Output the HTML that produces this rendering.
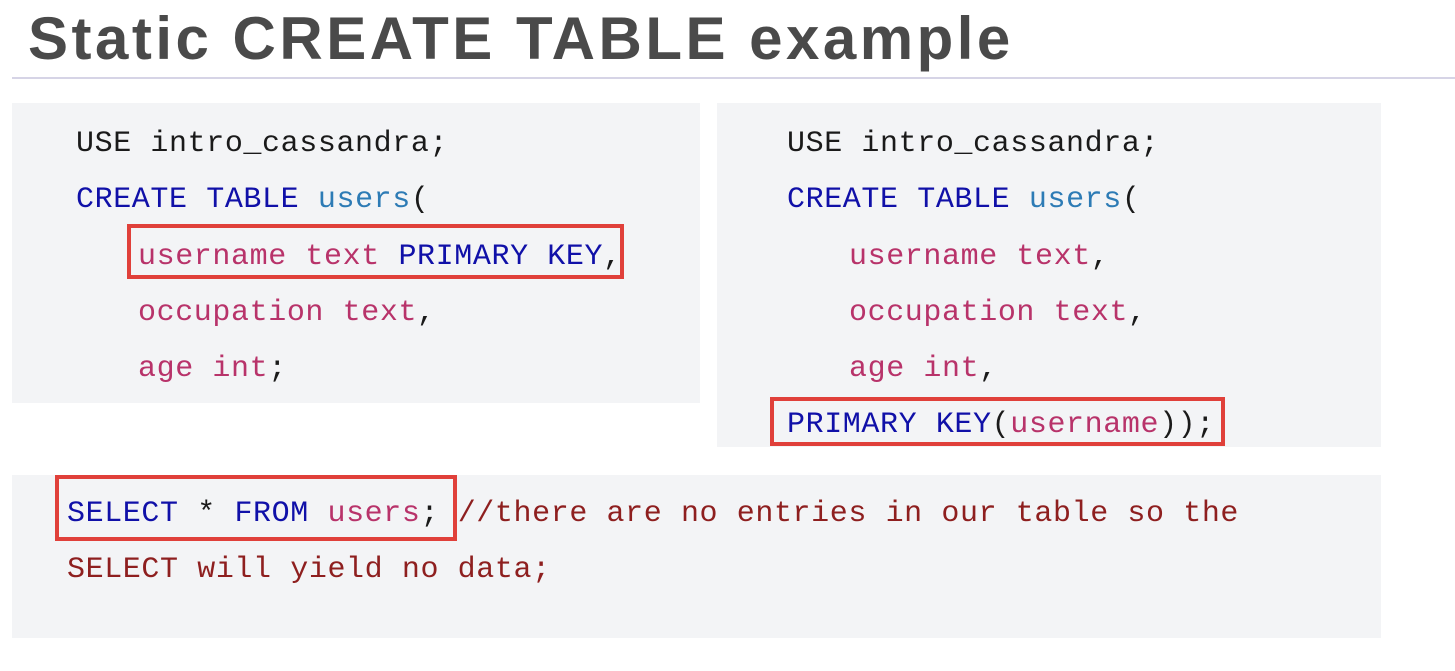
<!DOCTYPE html>
<html><head><meta charset="utf-8"><style>
body{margin:0;width:1455px;height:671px;background:#fff;position:relative;overflow:hidden;font-family:"Liberation Sans",sans-serif}
h1{position:absolute;left:28px;top:4px;margin:0;font-size:60px;font-weight:bold;color:#4a4a4a;letter-spacing:3.5px}
.rule{position:absolute;left:12px;top:77px;width:1443px;height:2px;background:#d6d4e6}
.box{position:absolute;background:#f3f4f6}
.code{position:absolute;font-family:"Liberation Mono",monospace;font-size:30px;letter-spacing:0.6px;line-height:56.3px;white-space:pre;color:#1a1a1a}
.k{color:#1010a8}.u{color:#2d7bb5}.p{color:#b8336a}.c{color:#8e1f1f}
.red{position:absolute;border:4px solid #e0403a;box-sizing:border-box}
</style></head><body>
<h1>Static CREATE TABLE example</h1>
<div class="rule"></div>
<div class="box" style="left:12px;top:103px;width:688px;height:300px"></div>
<div class="box" style="left:717px;top:103px;width:664px;height:344px"></div>
<div class="box" style="left:12px;top:475px;width:1369px;height:163px"></div>
<div class="code" style="left:76px;top:116px">USE intro_cassandra;
<span class="k">CREATE TABLE</span> <span class="u">users</span>(
<span style="padding-left:62px"></span><span class="p">username text</span> <span class="k">PRIMARY KEY</span>,
<span style="padding-left:62px"></span><span class="p">occupation text</span>,
<span style="padding-left:62px"></span><span class="p">age int</span>;</div>
<div class="code" style="left:787px;top:116px">USE intro_cassandra;
<span class="k">CREATE TABLE</span> <span class="u">users</span>(
<span style="padding-left:62px"></span><span class="p">username text</span>,
<span style="padding-left:62px"></span><span class="p">occupation text</span>,
<span style="padding-left:62px"></span><span class="p">age int</span>,
<span class="k">PRIMARY KEY</span>(<span class="p">username</span>));</div>
<div class="code" style="left:67px;top:486px"><span class="k">SELECT</span> * <span class="k">FROM</span> <span class="p">users</span>; <span class="c">//there are no entries in our table so the</span>
<span class="c">SELECT will yield no data;</span></div>
<div class="red" style="left:127px;top:224px;width:497px;height:55px"></div>
<div class="red" style="left:770px;top:397px;width:455px;height:49px"></div>
<div class="red" style="left:55px;top:475px;width:402px;height:66px"></div>
</body></html>
